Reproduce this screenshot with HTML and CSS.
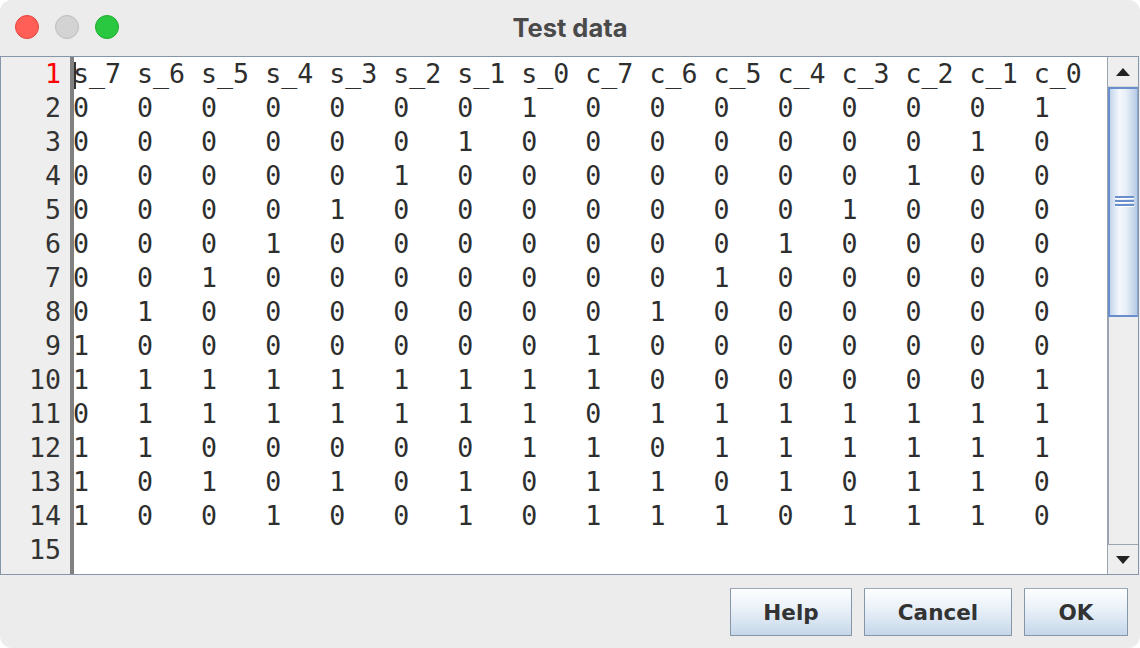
FILE: index.html
```html
<!DOCTYPE html>
<html>
<head>
<meta charset="utf-8">
<title>Test data</title>
<link rel="stylesheet" href="styles.css">
</head>
<body>
<div class="window">
  <div class="titlebar">
    <div class="lights">
      <span class="light red"></span>
      <span class="light gray"></span>
      <span class="light green"></span>
    </div>
    <div class="title">Test data</div>
    <div></div>
  </div>
  <div class="editor">
    <div class="gutter">
      <div class="ln cur">1</div>
      <div class="ln">2</div>
      <div class="ln">3</div>
      <div class="ln">4</div>
      <div class="ln">5</div>
      <div class="ln">6</div>
      <div class="ln">7</div>
      <div class="ln">8</div>
      <div class="ln">9</div>
      <div class="ln">10</div>
      <div class="ln">11</div>
      <div class="ln">12</div>
      <div class="ln">13</div>
      <div class="ln">14</div>
      <div class="ln">15</div>
    </div>
    <div class="text">
      <span class="caret"></span>
      <div class="line">s_7 s_6 s_5 s_4 s_3 s_2 s_1 s_0 c_7 c_6 c_5 c_4 c_3 c_2 c_1 c_0</div>
      <div class="line">0   0   0   0   0   0   0   1   0   0   0   0   0   0   0   1</div>
      <div class="line">0   0   0   0   0   0   1   0   0   0   0   0   0   0   1   0</div>
      <div class="line">0   0   0   0   0   1   0   0   0   0   0   0   0   1   0   0</div>
      <div class="line">0   0   0   0   1   0   0   0   0   0   0   0   1   0   0   0</div>
      <div class="line">0   0   0   1   0   0   0   0   0   0   0   1   0   0   0   0</div>
      <div class="line">0   0   1   0   0   0   0   0   0   0   1   0   0   0   0   0</div>
      <div class="line">0   1   0   0   0   0   0   0   0   1   0   0   0   0   0   0</div>
      <div class="line">1   0   0   0   0   0   0   0   1   0   0   0   0   0   0   0</div>
      <div class="line">1   1   1   1   1   1   1   1   1   0   0   0   0   0   0   1</div>
      <div class="line">0   1   1   1   1   1   1   1   0   1   1   1   1   1   1   1</div>
      <div class="line">1   1   0   0   0   0   0   1   1   0   1   1   1   1   1   1</div>
      <div class="line">1   0   1   0   1   0   1   0   1   1   0   1   0   1   1   0</div>
      <div class="line">1   0   0   1   0   0   1   0   1   1   1   0   1   1   1   0</div>
      <div class="line"> </div>
    </div>
    <div class="vscroll">
      <div class="sbtn">
        <svg width="14" height="8" viewBox="0 0 14 8"><path d="M0 8 L7 0 L14 8 Z" fill="#222"/></svg>
      </div>
      <div class="track">
        <div class="thumb">
          <div class="grip"><span></span><span></span><span></span></div>
        </div>
      </div>
      <div class="sbtn down">
        <svg width="14" height="8" viewBox="0 0 14 8"><path d="M0 0 L14 0 L7 8 Z" fill="#222"/></svg>
      </div>
    </div>
  </div>
  <div class="buttons">
    <button class="btn help">Help</button>
    <button class="btn cancel">Cancel</button>
    <button class="btn ok">OK</button>
  </div>
</div>
</body>
</html>
```

FILE: styles.css
```css
html, body {
  margin: 0;
  padding: 0;
  background: #ffffff;
}

.window {
  width: 1140px;
  height: 648px;
  background: #ececec;
  border-radius: 12px;
  overflow: hidden;
  display: flex;
  flex-direction: column;
}

.titlebar {
  height: 56px;
  flex: none;
  display: grid;
  grid-template-columns: 1fr auto 1fr;
  align-items: center;
  background: #ececec;
}

.lights {
  display: flex;
  gap: 16px;
  padding-left: 15px;
}

.light {
  width: 24px;
  height: 24px;
  border-radius: 50%;
  box-sizing: border-box;
  margin-top: -2px;
}

.light.red { background: #ff5f57; border: 1px solid #e2463f; }
.light.gray { background: #d3d3d3; border: 1px solid #bdbdbd; }
.light.green { background: #2ac840; border: 1px solid #1eab2f; }

.title {
  font-family: "Inter", "Open Sans", sans-serif;
  font-weight: 700;
  font-size: 25.5px;
  color: #4a4a4a;
  margin-top: -2px;
}

.editor {
  height: 519px;
  flex: none;
  box-sizing: border-box;
  border: 1px solid #8596a8;
  margin-right: 1px;
  display: flex;
  background: #ffffff;
}

.gutter {
  width: 69px;
  flex: none;
  background: #eeeeee;
  border-right: 4px solid #808080;
  box-sizing: content-box;
  font-family: "DejaVu Sans Mono", monospace;
  font-size: 26.6px;
  line-height: 34px;
  color: #333333;
  text-align: right;
}

.ln {
  padding-right: 9px;
  height: 34px;
}

.ln.cur {
  color: #ff0000;
}

.text {
  flex: 1;
  position: relative;
  font-family: "DejaVu Sans Mono", monospace;
  font-size: 26.6px;
  line-height: 34px;
  color: #2e2e2e;
  margin-left: -1px;
}

.line {
  white-space: pre;
  height: 34px;
}

.caret {
  position: absolute;
  left: 1px;
  top: 5px;
  width: 2px;
  height: 27px;
  background: #333333;
}

.vscroll {
  width: 30px;
  flex: none;
  border-left: 1px solid #9ba5b0;
  display: flex;
  flex-direction: column;
  background: #eeeeee;
}

.sbtn {
  height: 30px;
  flex: none;
  display: flex;
  align-items: center;
  justify-content: center;
  background: #eeeeee;
  border-bottom: 1px solid #d4d8dc;
  box-sizing: border-box;
}

.sbtn.down {
  border-bottom: none;
  border-top: 1px solid #9ba5b0;
}

.track {
  flex: 1;
  background: #eeeeee;
  box-shadow: inset 1px 0 0 #9aa3ad;
}

.thumb {
  height: 230px;
  box-sizing: border-box;
  border: 2px solid #6a8dcb;
  border-right: 1px solid #8aa4cf;
  background: linear-gradient(to right, #c3d5eb 0%, #f4f8fc 35%, #e6eef7 60%, #b7cbe4 100%);
  display: flex;
  align-items: center;
  justify-content: center;
}

.grip {
  display: flex;
  flex-direction: column;
  gap: 1px;
  margin-top: -2px;
}

.grip span {
  display: block;
  width: 19px;
  height: 2px;
  background: #6a8dcb;
  border-bottom: 1px solid #ffffff;
  margin-left: 2px;
}

.buttons {
  flex: 1;
  display: flex;
  justify-content: flex-end;
  align-items: flex-start;
  gap: 12px;
  padding: 13px 12px 0 0;
}

.btn {
  height: 48px;
  box-sizing: border-box;
  border: 1px solid #8596a6;
  border-top-color: #9aa8b6;
  border-radius: 1px;
  background: linear-gradient(to bottom, #fdfeff 0%, #e8f0f8 45%, #c6d7ea 100%);
  font-family: "DejaVu Sans", sans-serif;
  font-weight: 700;
  font-size: 21.5px;
  color: #333333;
  padding: 0;
}

.btn.help { width: 122px; }
.btn.cancel { width: 148px; }
.btn.ok { width: 104px; }
```
